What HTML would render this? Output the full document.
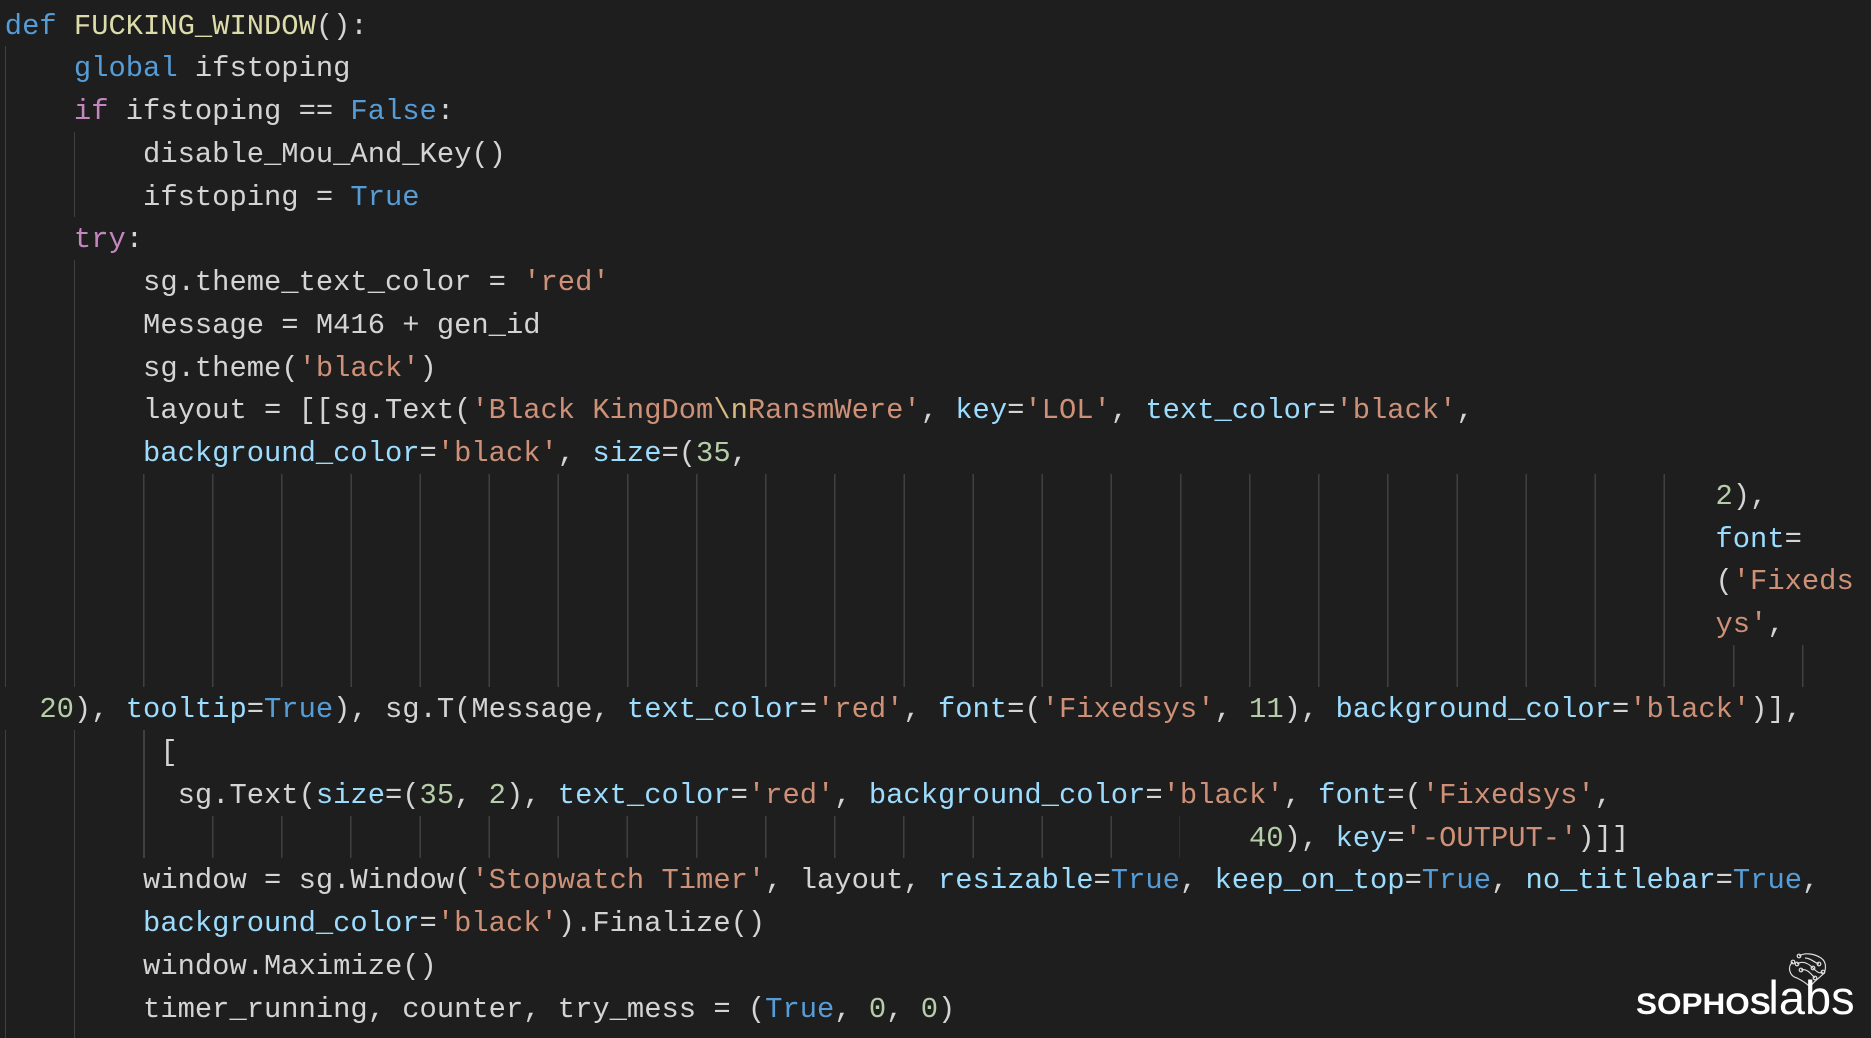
<!DOCTYPE html>
<html><head><meta charset="utf-8"><style>
html,body{margin:0;padding:0;background:#1e1e1e;width:1871px;height:1038px;overflow:hidden}
.l{position:absolute;left:4.8px;white-space:pre;font-family:"Liberation Mono",monospace;font-size:28.8px;line-height:42.74px;height:42.74px;color:#d4d4d4;margin-top:2px}
.k{color:#569cd6}.c{color:#c586c0}.f{color:#dcdcaa}.s{color:#ce9178}.p{color:#9cdcfe}.n{color:#b5cea8}.e{color:#d7ba7d}
.g{position:absolute;width:1.5px;background:#404040}
.gr{position:absolute;background:repeating-linear-gradient(to right,#404040 0 1.5px,transparent 1.5px 69.12px)}
</style></head><body>
<div class="g" style="left:4.8px;top:46.3px;height:641px"></div>
<div class="g" style="left:4.8px;top:730.2px;height:308px"></div>
<div class="g" style="left:73.9px;top:131.8px;height:85.5px"></div>
<div class="g" style="left:73.9px;top:260px;height:427.4px"></div>
<div class="g" style="left:73.9px;top:730.2px;height:308px"></div>
<div class="g" style="left:143px;top:730.2px;height:128.2px"></div>
<div class="gr" style="left:143px;top:473.7px;height:213.7px;width:1522px"></div>
<div class="gr" style="left:1732.8px;top:644.7px;height:42.7px;width:72px"></div>
<div class="gr" style="left:212.2px;top:815.7px;height:42.7px;width:968px"></div>

<div class="l" style="top:3.6px"><span class="k">def</span> <span class="f">FUCKING_WINDOW</span>():</div>
<div class="l" style="top:46.3px">    <span class="k">global</span> ifstoping</div>
<div class="l" style="top:89.1px">    <span class="c">if</span> ifstoping == <span class="k">False</span>:</div>
<div class="l" style="top:131.8px">        disable_Mou_And_Key()</div>
<div class="l" style="top:174.6px">        ifstoping = <span class="k">True</span></div>
<div class="l" style="top:217.3px">    <span class="c">try</span>:</div>
<div class="l" style="top:260px">        sg.theme_text_color = <span class="s">'red'</span></div>
<div class="l" style="top:302.8px">        Message = M416 + gen_id</div>
<div class="l" style="top:345.5px">        sg.theme(<span class="s">'black'</span>)</div>
<div class="l" style="top:388.3px">        layout = [[sg.Text(<span class="s">'Black KingDom</span><span class="e">\n</span><span class="s">RansmWere'</span>, <span class="p">key</span>=<span class="s">'LOL'</span>, <span class="p">text_color</span>=<span class="s">'black'</span>,</div>
<div class="l" style="top:431px">        <span class="p">background_color</span>=<span class="s">'black'</span>, <span class="p">size</span>=(<span class="n">35</span>,</div>
<div class="l" style="top:473.7px;left:1715.5px"><span class="n">2</span>),</div>
<div class="l" style="top:516.5px;left:1715.5px"><span class="p">font</span>=</div>
<div class="l" style="top:559.2px;left:1715.5px">(<span class="s">'Fixeds</span></div>
<div class="l" style="top:602px;left:1715.5px"><span class="s">ys'</span>,</div>
<div class="l" style="top:687.4px">  <span class="n">20</span>), <span class="p">tooltip</span>=<span class="k">True</span>), sg.T(Message, <span class="p">text_color</span>=<span class="s">'red'</span>, <span class="p">font</span>=(<span class="s">'Fixedsys'</span>, <span class="n">11</span>), <span class="p">background_color</span>=<span class="s">'black'</span>)],</div>
<div class="l" style="top:730.2px">         [</div>
<div class="l" style="top:772.9px">          sg.Text(<span class="p">size</span>=(<span class="n">35</span>, <span class="n">2</span>), <span class="p">text_color</span>=<span class="s">'red'</span>, <span class="p">background_color</span>=<span class="s">'black'</span>, <span class="p">font</span>=(<span class="s">'Fixedsys'</span>,</div>
<div class="l" style="top:815.7px">                                                                        <span class="n">40</span>), <span class="p">key</span>=<span class="s">'-OUTPUT-'</span>)]]</div>
<div class="l" style="top:858.4px">        window = sg.Window(<span class="s">'Stopwatch Timer'</span>, layout, <span class="p">resizable</span>=<span class="k">True</span>, <span class="p">keep_on_top</span>=<span class="k">True</span>, <span class="p">no_titlebar</span>=<span class="k">True</span>,</div>
<div class="l" style="top:901.2px">        <span class="p">background_color</span>=<span class="s">'black'</span>).Finalize()</div>
<div class="l" style="top:943.9px">        window.Maximize()</div>
<div class="l" style="top:986.6px">        timer_running, counter, try_mess = (<span class="k">True</span>, <span class="n">0</span>, <span class="n">0</span>)</div>

<svg style="position:absolute;left:1785px;top:952px" width="44" height="36" viewBox="0 0 44 36" fill="none" stroke="#ddd" stroke-width="1.2">
<path d="M8 10 C2 14 4 24 12 26 C16 28 20 30 24 34"/>
<path d="M14 4 C20 0 30 2 36 6 C42 10 42 20 36 24 C32 28 28 30 26 34"/>
<path d="M12 12 C18 8 24 12 28 16 C32 20 34 22 38 20"/>
<path d="M16 18 C22 16 26 22 30 26"/>
<path d="M20 6 C26 6 28 10 34 12"/>
<circle cx="14" cy="4" r="1.8"/><circle cx="8" cy="10" r="1.8"/><circle cx="12" cy="12" r="1.8"/><circle cx="34" cy="12" r="1.8"/><circle cx="38" cy="20" r="1.8"/><circle cx="16" cy="18" r="1.8"/><circle cx="30" cy="26" r="1.8"/><circle cx="28" cy="16" r="1.8"/>
</svg>
<div style="position:absolute;left:1636px;top:978px;font-family:'Liberation Sans',sans-serif;color:#fff;white-space:nowrap;line-height:40px;height:40px">
<span style="font-weight:bold;font-size:30px;display:inline-block;transform:scaleX(1.05);transform-origin:left">SOPHOS</span><span style="font-size:47px;font-weight:normal;margin-left:4px;letter-spacing:0px">labs</span>
</div>
</body></html>
